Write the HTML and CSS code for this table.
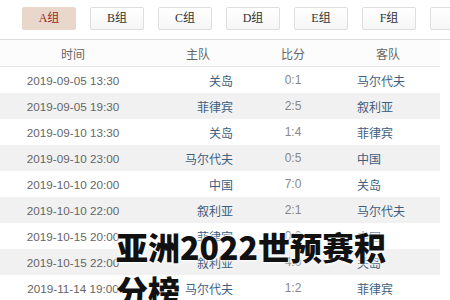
FILE: index.html
```html
<!DOCTYPE html>
<html>
<head>
<meta charset="utf-8">
<link rel="stylesheet" href="styles.css">
</head>
<body>
<div class="page">
  <div class="tabs">
    <span class="tab active">A组</span>
    <span class="tab">B组</span>
    <span class="tab">C组</span>
    <span class="tab">D组</span>
    <span class="tab">E组</span>
    <span class="tab">F组</span>
    <span class="tab"></span>
  </div>
  <table class="grid">
    <colgroup><col class="c1"><col class="c2"><col class="c3"><col class="c4"></colgroup>
    <thead>
      <tr><th>时间</th><th>主队</th><th>比分</th><th>客队</th></tr>
    </thead>
    <tbody>
      <tr><td class="t">2019-09-05 13:30</td><td class="h">关岛</td><td class="s">0:1</td><td class="a">马尔代夫</td></tr>
      <tr><td class="t">2019-09-05 19:30</td><td class="h">菲律宾</td><td class="s">2:5</td><td class="a">叙利亚</td></tr>
      <tr><td class="t">2019-09-10 13:30</td><td class="h">关岛</td><td class="s">1:4</td><td class="a">菲律宾</td></tr>
      <tr><td class="t">2019-09-10 23:00</td><td class="h">马尔代夫</td><td class="s">0:5</td><td class="a">中国</td></tr>
      <tr><td class="t">2019-10-10 20:00</td><td class="h">中国</td><td class="s">7:0</td><td class="a">关岛</td></tr>
      <tr><td class="t">2019-10-10 22:00</td><td class="h">叙利亚</td><td class="s">2:1</td><td class="a">马尔代夫</td></tr>
      <tr><td class="t">2019-10-15 20:00</td><td class="h">菲律宾</td><td class="s">0:0</td><td class="a">中国</td></tr>
      <tr><td class="t">2019-10-15 22:00</td><td class="h">叙利亚</td><td class="s">4:0</td><td class="a">关岛</td></tr>
      <tr><td class="t">2019-11-14 19:00</td><td class="h">马尔代夫</td><td class="s">1:2</td><td class="a">菲律宾</td></tr>
    </tbody>
  </table>
  <div class="title">亚洲2022世预赛积<br>分榜</div>
</div>
</body>
</html>
```
FILE: styles.css
```css
html, body {
  margin: 0;
  padding: 0;
  background: #fff;
}
.page {
  position: relative;
  width: 450px;
  height: 300px;
  overflow: hidden;
  font-family: "Liberation Sans", "Noto Sans CJK SC", sans-serif;
  font-size: 12px;
}
.tabs {
  display: flex;
  gap: 14px;
  height: 40px;
  padding: 7px 0 0 22px;
  box-sizing: border-box;
  border-bottom: 1px solid #dcdcdc;
  white-space: nowrap;
}
.tab {
  flex: none;
  width: 52px;
  height: 21px;
  line-height: 21px;
  text-align: center;
  border: 1px solid #dedede;
  border-radius: 2px;
  background: linear-gradient(#ffffff, #f6f6f6);
  color: #333;
  font-family: "Liberation Serif", "Noto Sans CJK SC", serif;
  font-size: 12px;
}
.tab.active {
  background: #e9d7cb;
  border-color: #e9d7cb;
  color: #9e2a22;
}
.grid {
  width: 440px;
  border-collapse: collapse;
  table-layout: fixed;
}
.c1 { width: 146px; }
.c2 { width: 104px; }
.c3 { width: 86px; }
.c4 { width: 104px; }
.grid th {
  height: 26px;
  padding: 0;
  font-weight: normal;
  color: #666;
  font-family: "Noto Sans CJK SC", sans-serif;
  font-size: 12px;
  text-align: center;
  background: #fcfcfc;
  border-bottom: 1px solid #e6e6e6;
}
.grid td {
  height: 26px;
  padding: 0;
  white-space: nowrap;
}
.grid tbody tr:nth-child(even) td {
  background: #f1f1f1;
}
.t {
  text-align: center;
  color: #666;
  font-size: 11.7px;
}
.h {
  text-align: right;
  padding-right: 17px !important;
  color: #3d5d80;
}
.s {
  text-align: center;
  color: #888;
}
.a {
  text-align: left;
  padding-left: 21px !important;
  color: #3d5d80;
}
.title {
  position: absolute;
  left: 116px;
  top: 224px;
  font-family: "Noto Sans CJK SC", sans-serif;
  font-weight: 900;
  font-size: 32px;
  line-height: 44px;
  color: #111;
  white-space: nowrap;
  text-shadow: 0 0 2px #fff, 0 0 3px #fff, 0 0 4px #fff;
}
```
